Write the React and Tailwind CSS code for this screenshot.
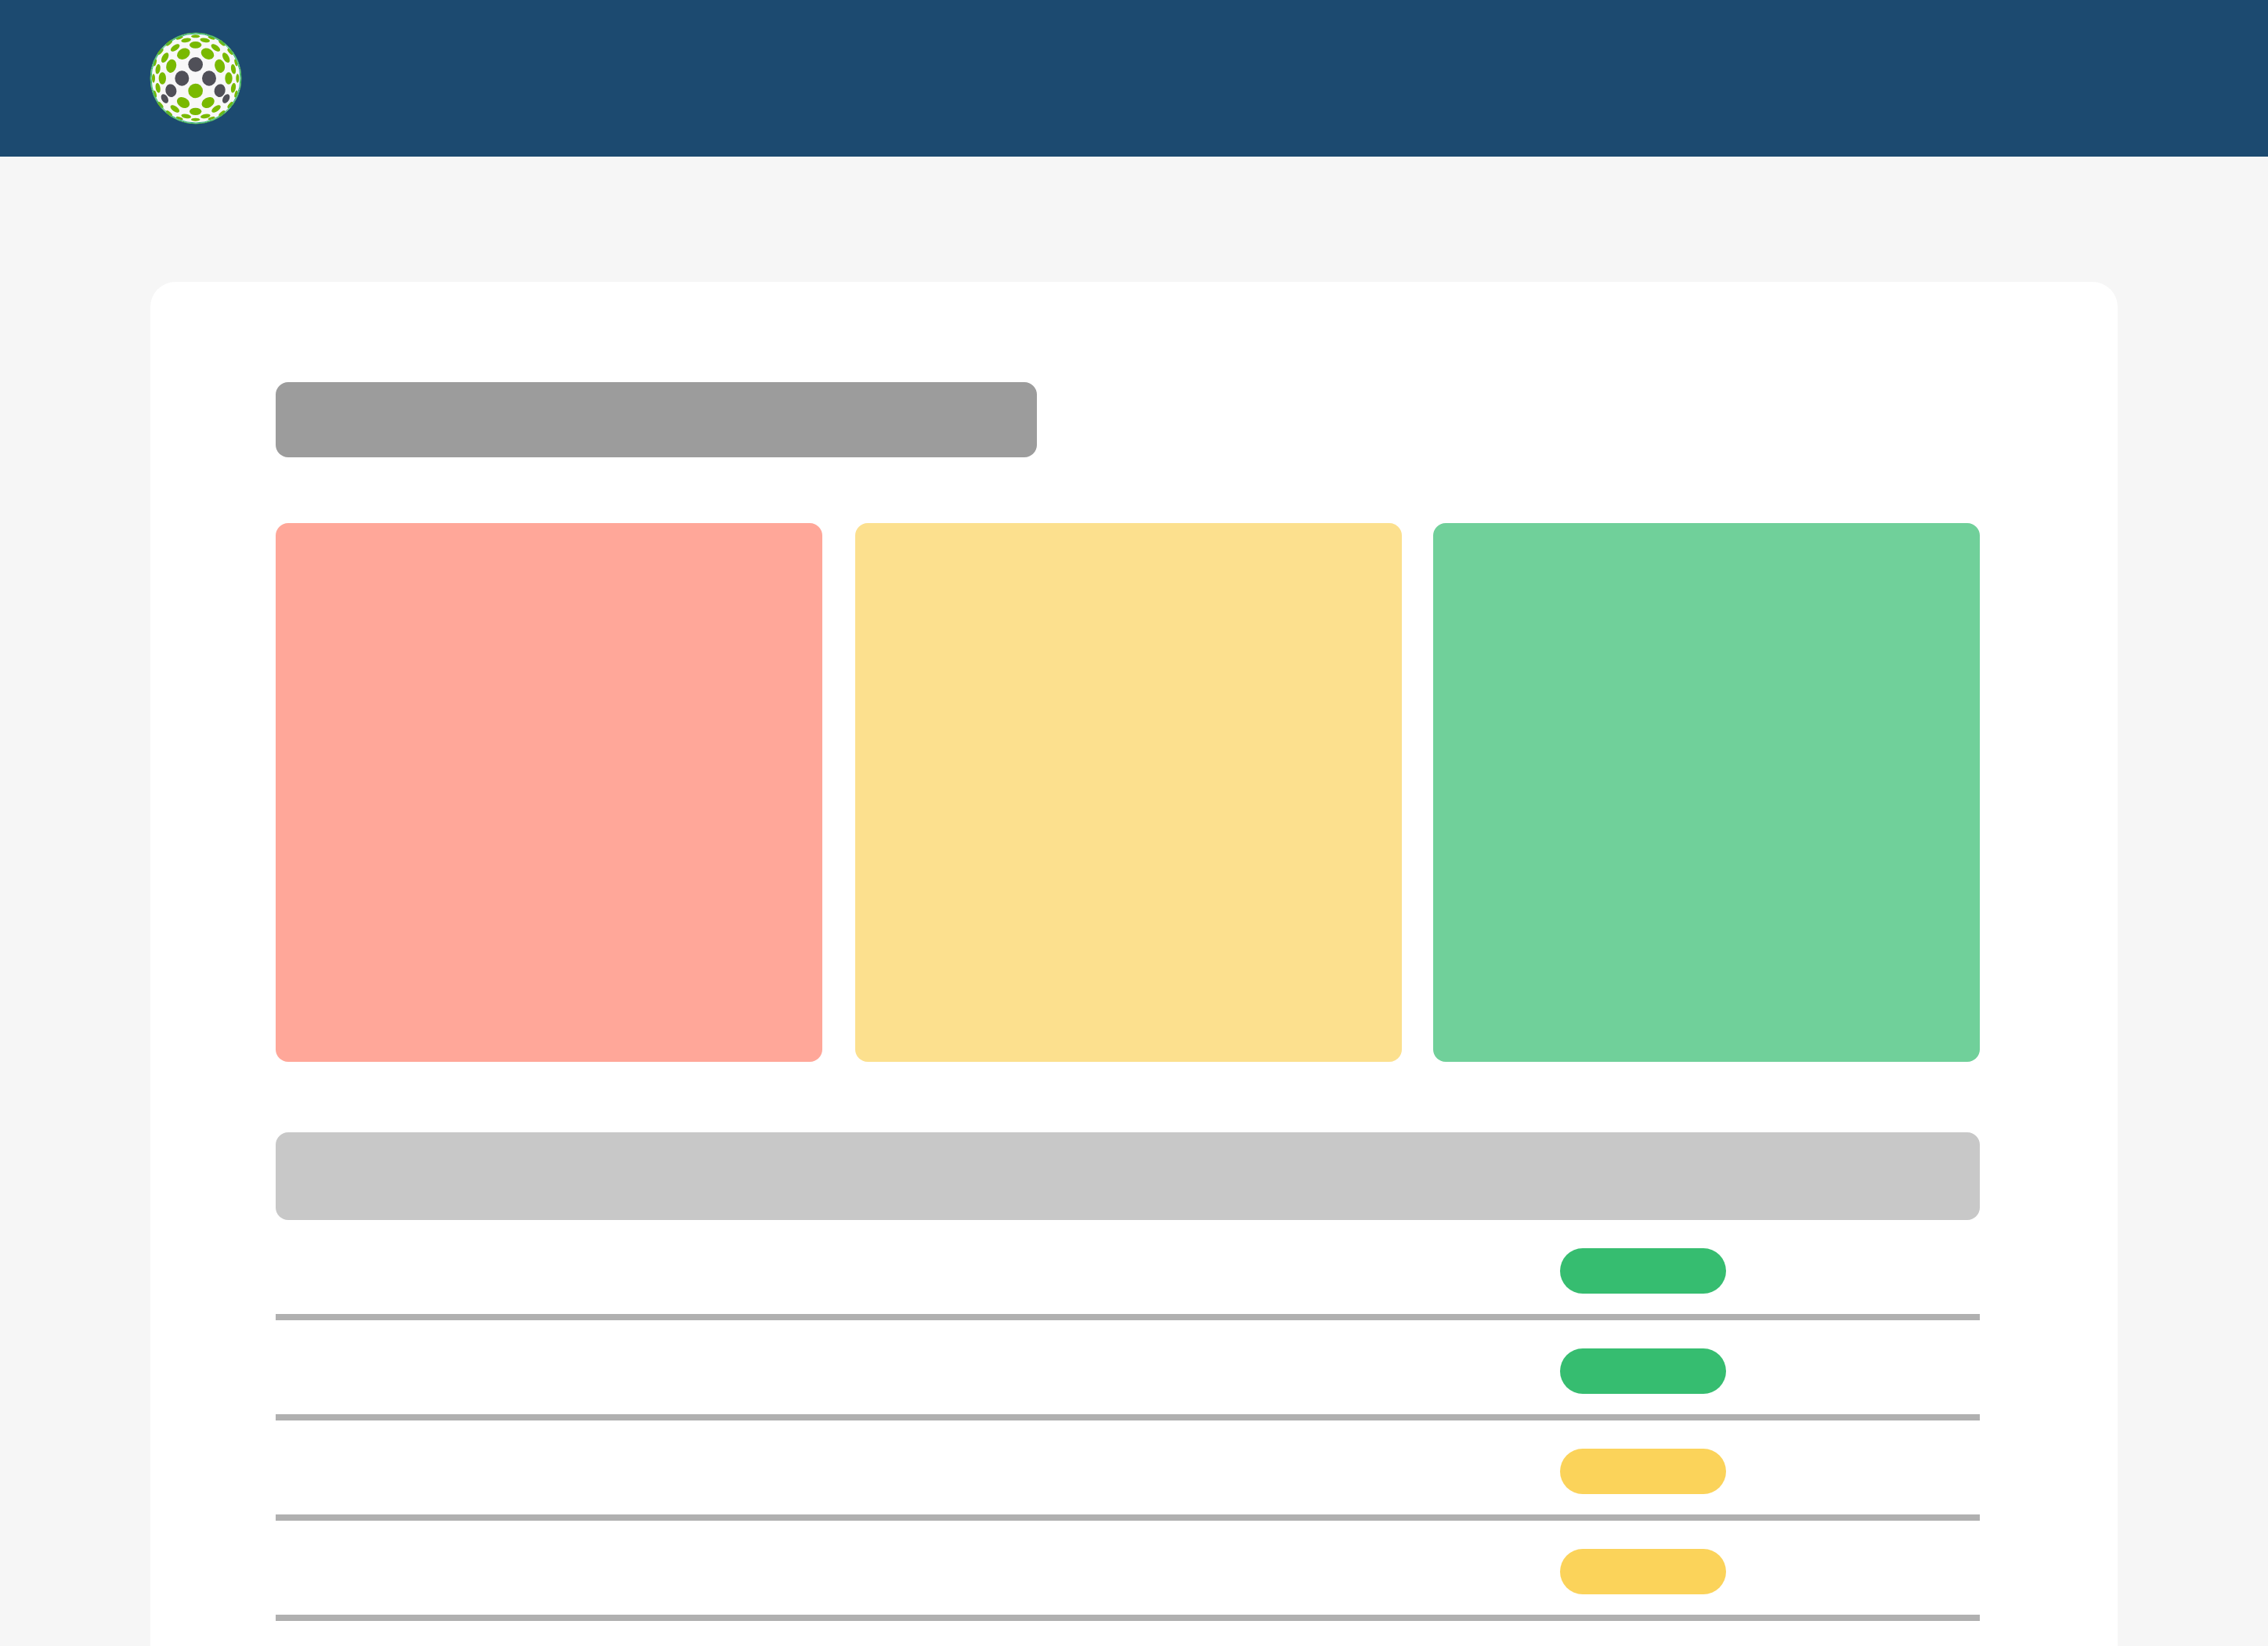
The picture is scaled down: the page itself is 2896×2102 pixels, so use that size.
const dark = [
  [239, 187, 28, 28, 0], [187, 240, 27, 29, 0], [291, 240, 27, 29, 0],
  [145, 287, 21, 25, -15], [332, 287, 21, 25, 15], [121, 318, 12, 19, -30], [356, 318, 12, 19, 30],
];
const green = [
  [239, 288, 28, 28, 0], [192, 333, 26, 19, 30], [287, 333, 26, 19, -30], [239, 367, 23, 14, 0],
  [146, 193, 19, 26, 15], [332, 193, 19, 26, -15], [193, 146, 26, 20, -30], [285, 146, 26, 20, 30],
  [239, 112, 23, 13, 0], [112, 240, 14, 23, 0], [366, 240, 14, 23, 0],
  [161, 123, 20, 10, -35], [316, 123, 20, 10, 35], [122, 161, 11, 21, 30], [356, 161, 11, 21, -30],
  [203, 94, 19, 8, -10], [275, 94, 19, 8, 10], [95, 205, 9, 19, 10], [384, 205, 9, 19, -10],
  [95, 277, 9, 19, -10], [384, 277, 9, 19, 10], [160, 357, 20, 10, 35], [318, 357, 20, 10, -35],
  [203, 385, 19, 8, 10], [277, 385, 19, 8, -10], [239, 398, 17, 6, 0], [239, 79, 17, 6, 0],
  [78, 240, 6, 17, 0], [400, 240, 6, 17, 0], [138, 105, 15, 6, -40], [340, 105, 15, 6, 40],
  [105, 138, 6, 15, 40], [372, 138, 6, 15, -40], [105, 342, 6, 15, -40], [372, 342, 6, 15, 40],
  [138, 374, 15, 6, 40], [340, 374, 15, 6, -40], [178, 85, 14, 5, -20], [300, 85, 14, 5, 20],
  [178, 393, 14, 5, 20], [300, 393, 14, 5, -20], [84, 180, 5, 14, 15], [394, 180, 5, 14, -15],
  [84, 300, 5, 14, -15], [394, 300, 5, 14, 15],
];

function Logo() {
  return (
    <svg viewBox="63 63 354 354" className="block w-[118px] h-[118px]" aria-hidden="true">
      <circle cx="240" cy="240" r="174" fill="#f8f8f8" stroke="#55bd4a" strokeWidth="3" />
      {green.map(([cx, cy, rx, ry, a], i) => (
        <ellipse key={i} cx={cx} cy={cy} rx={rx} ry={ry} fill="#79b900" transform={`rotate(${a} ${cx} ${cy})`} />
      ))}
      {dark.map(([cx, cy, rx, ry, a], i) => (
        <ellipse key={i} cx={cx} cy={cy} rx={rx} ry={ry} fill="#505058" transform={`rotate(${a} ${cx} ${cy})`} />
      ))}
      <circle cx="240" cy="240" r="171" fill="none" stroke="#2ab27c" strokeWidth="3" />
    </svg>
  );
}

function Row({ color }) {
  return (
    <div className="h-[128px] border-b-[8px] border-[#b0b0b0] pt-[36px] pl-[1640px]">
      <div className={`w-[212px] h-[58px] rounded-[29px] ${color}`} />
    </div>
  );
}

export default function App() {
  return (
    <div className="h-[2102px] overflow-hidden bg-[#f6f6f6]">
      <header className="h-[200px] bg-[#1c4a70] pl-[191px] flex items-center">
        <Logo />
      </header>
      <main className="mx-[192px] mt-[160px]">
        <div className="bg-white rounded-[32px] pt-[128px] pl-[160px] pr-[176px] pb-[80px]">
          <div className="w-[972px] h-[96px] rounded-[16px] bg-[#9c9c9c]" />
          <div className="mt-[84px] flex">
            <div className="w-[698px] h-[688px] rounded-[16px] bg-[#ffa799]" />
            <div className="ml-[42px] w-[698px] h-[688px] rounded-[16px] bg-[#fce08e]" />
            <div className="ml-[40px] w-[698px] h-[688px] rounded-[16px] bg-[#70d09a]" />
          </div>
          <div className="mt-[90px] h-[112px] rounded-[16px] bg-[#c8c8c8]" />
          <Row color="bg-[#36bd70]" />
          <Row color="bg-[#36bd70]" />
          <Row color="bg-[#fbd35a]" />
          <Row color="bg-[#fbd35a]" />
        </div>
      </main>
    </div>
  );
}
